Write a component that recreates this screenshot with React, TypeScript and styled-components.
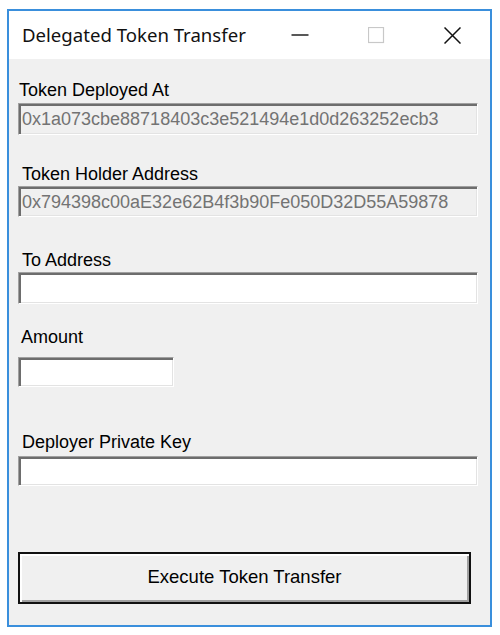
import { ReactElement } from 'react'
import styled, { createGlobalStyle } from 'styled-components'

const GlobalStyle = createGlobalStyle`
  html, body {
    margin: 0;
    padding: 0;
    background: #ffffff;
  }
`

const FONT = `'Liberation Sans', Arial, sans-serif`

const StyledPage = styled.div`
  width: 500px;
  height: 635px;
  padding: 9px 0 0 7px;
  box-sizing: border-box;
`

const StyledWindow = styled.div`
  width: 485px;
  height: 618px;
  box-sizing: border-box;
  border: 2px solid #3a8fdc;
  display: flex;
  flex-direction: column;
  background: #f0f0f0;
`

const StyledTitleBar = styled.div`
  height: 48px;
  flex: none;
  background: #ffffff;
  display: flex;
  align-items: center;
`

const StyledTitle = styled.div`
  flex: 1;
  padding-left: 13px;
  padding-bottom: 2px;
  font-family: 'Noto Sans', 'Open Sans', sans-serif;
  font-size: 18.6px;
  color: #111;
`

const StyledCaptionButton = styled.div`
  width: 76px;
  height: 48px;
  display: flex;
  align-items: center;
  justify-content: center;
`

const StyledContent = styled.div`
  flex: 1;
  display: flex;
  flex-direction: column;
  padding-left: 9px;
`

const StyledField = styled.div<{ $top: number; $gap: number }>`
  display: flex;
  flex-direction: column;
  margin-top: ${(p) => p.$top}px;
  gap: ${(p) => p.$gap}px;
`

const StyledLabel = styled.div<{ $indent: number }>`
  font-family: ${FONT};
  font-size: 18px;
  line-height: 20px;
  height: 20px;
  color: #000;
  padding-left: ${(p) => p.$indent}px;
`

const StyledBox = styled.div<{ $width: number; $height: number; $readOnly?: boolean }>`
  width: ${(p) => p.$width}px;
  height: ${(p) => p.$height}px;
  box-sizing: border-box;
  border-style: solid;
  border-width: 1px;
  border-color: #a0a0a0 #ffffff #ffffff #a0a0a0;
  box-shadow: inset 2px 2px 0 #6d6d6d, inset -1px -1px 0 #e3e3e3;
  background: ${(p) => (p.$readOnly ? '#f0f0f0' : '#ffffff')};
  padding: 4px 0 0 3px;
  font-family: ${FONT};
  font-size: 18px;
  line-height: 22px;
  color: #737373;
  white-space: nowrap;
  overflow: hidden;
`

const StyledButton = styled.button`
  margin-top: 66px;
  width: 453px;
  height: 52px;
  box-sizing: border-box;
  border: 2px solid #111;
  background: #f0f0f0;
  box-shadow: inset 2px 2px 0 #ffffff, inset -2px -2px 0 #a0a0a0;
  font-family: ${FONT};
  font-size: 18.5px;
  color: #000;
  padding: 0 0 2px;
  cursor: pointer;
`

const MinimizeIcon = (): ReactElement => (
  <svg width="18" height="18" viewBox="0 0 18 18">
    <line x1="0.5" y1="9" x2="17.5" y2="9" stroke="#111" strokeWidth="1.4" />
  </svg>
)

const MaximizeIcon = (): ReactElement => (
  <svg width="17" height="17" viewBox="0 0 17 17">
    <rect x="0.5" y="0.5" width="15" height="15" fill="none" stroke="#c8c8c8" strokeWidth="1.2" />
  </svg>
)

const CloseIcon = (): ReactElement => (
  <svg width="17" height="17" viewBox="0 0 17 17">
    <path d="M0.5 0.5 L16.5 16.5 M16.5 0.5 L0.5 16.5" stroke="#111" strokeWidth="1.5" />
  </svg>
)

const App = (): ReactElement => {
  return (
    <StyledPage>
      <GlobalStyle />
      <StyledWindow>
        <StyledTitleBar>
          <StyledTitle>Delegated Token Transfer</StyledTitle>
          <StyledCaptionButton>
            <MinimizeIcon />
          </StyledCaptionButton>
          <StyledCaptionButton>
            <MaximizeIcon />
          </StyledCaptionButton>
          <StyledCaptionButton>
            <CloseIcon />
          </StyledCaptionButton>
        </StyledTitleBar>

        <StyledContent>
          <StyledField $top={21} $gap={3}>
            <StyledLabel $indent={1}>Token Deployed At</StyledLabel>
            <StyledBox $width={460} $height={32} $readOnly>
              0x1a073cbe88718403c3e521494e1d0d263252ecb3
            </StyledBox>
          </StyledField>

          <StyledField $top={29} $gap={2}>
            <StyledLabel $indent={4}>Token Holder Address</StyledLabel>
            <StyledBox $width={460} $height={31} $readOnly>
              0x794398c00aE32e62B4f3b90Fe050D32D55A59878
            </StyledBox>
          </StyledField>

          <StyledField $top={33} $gap={2}>
            <StyledLabel $indent={4}>To Address</StyledLabel>
            <StyledBox $width={460} $height={32} />
          </StyledField>

          <StyledField $top={23} $gap={10}>
            <StyledLabel $indent={3}>Amount</StyledLabel>
            <StyledBox $width={156} $height={30} />
          </StyledField>

          <StyledField $top={45} $gap={4}>
            <StyledLabel $indent={4}>Deployer Private Key</StyledLabel>
            <StyledBox $width={460} $height={30} />
          </StyledField>

          <StyledButton>Execute Token Transfer</StyledButton>
        </StyledContent>
      </StyledWindow>
    </StyledPage>
  )
}

export default App
